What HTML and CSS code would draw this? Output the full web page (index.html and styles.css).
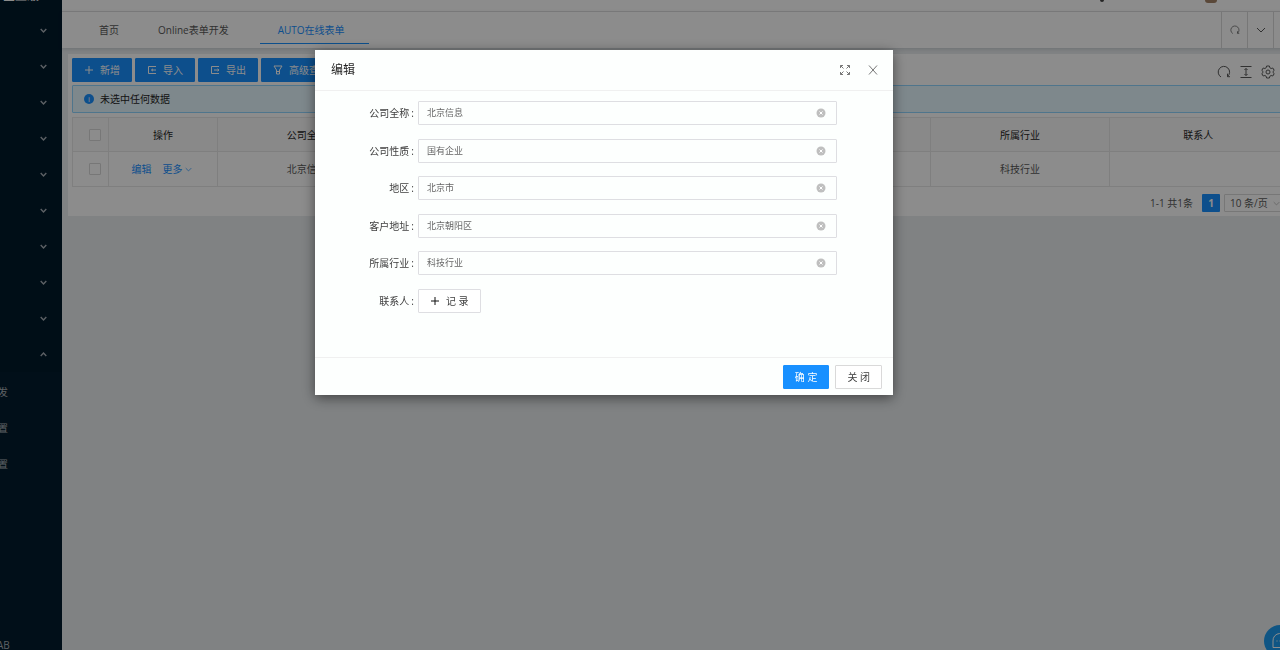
FILE: index.html
```html
<!DOCTYPE html>
<html lang="zh-CN">
<head>
<meta charset="utf-8">
<title>AUTO在线表单</title>
<link rel="stylesheet" href="styles.css">
</head>
<body>
<svg class="sprite" aria-hidden="true">
  <symbol id="down" viewBox="0 0 10 10"><path d="M1 3l4 4 4-4"/></symbol>
  <symbol id="up" viewBox="0 0 10 10"><path d="M1 7l4-4 4 4"/></symbol>
  <symbol id="plus" viewBox="0 0 10 10"><path d="M5 1v8M1 5h8"/></symbol>
  <symbol id="import" viewBox="0 0 10 10"><path d="M9 1.500H1.500v7H9M9 5H4.500M6 3.800L4.500 5 6 6.200"/></symbol>
  <symbol id="export" viewBox="0 0 10 10"><path d="M9 1.500H1.500v7H9M4 5h5M7.500 3.800L9 5 7.500 6.200"/></symbol>
  <symbol id="filter" viewBox="0 0 10 10"><path d="M1 1h8L6.500 5v4h-3V5zM3.500 6.500h3"/></symbol>
  <symbol id="reload" viewBox="0 0 14 14"><path d="M4 12A5.700 5.700 0 1 1 10.500 11.500M10.500 8.700v3h2.500"/></symbol>
  <symbol id="height" viewBox="0 0 14 14"><path d="M1.500 1.500h11M1.500 12.500h11M7 4v6M5.500 5L7 3.300 8.500 5M5.500 9L7 10.700 8.500 9"/></symbol>
  <symbol id="gear" viewBox="0 0 14 14"><path d="M5.600 1h2.800l.4 1.700 1.300.8 1.700-.5 1.400 2.400L12 6.500v1l1.200 1.100-1.400 2.400-1.700-.5-1.300.8-.4 1.700H5.600l-.4-1.700-1.300-.8-1.700.5L.8 8.600 2 7.500v-1L.8 5.400 2.200 3l1.700.5 1.300-.8z"/><circle cx="7" cy="7" r="2"/></symbol>
  <symbol id="clear" viewBox="0 0 10 10"><circle cx="5" cy="5" r="4.500" fill="#bfbfbf" stroke="none"/><path d="M3.500 3.500l3 3M6.500 3.500l-3 3" stroke="#fff"/></symbol>
  <symbol id="full" viewBox="0 0 10 10"><path d="M.5 3V.5H3M.5.5l3 3M7 .5h2.500V3M9.500.5l-3 3M.5 7v2.500H3M.5 9.500l3-3M7 9.500h2.500V7M9.500 9.500l-3-3"/></symbol>
  <symbol id="close" viewBox="0 0 10 10"><path d="M1 .5l8 9M9 .5l-8 9"/></symbol>
  <symbol id="chat" viewBox="0 0 18 18"><path d="M2 15.500V9a7 7 0 1 1 7 6.500zM5.500 9h1M8.500 9h1M11.500 9h1"/></symbol>
</svg>
<div class="app">
  <nav class="sidebar">
    <div class="logo">企业级</div>
    <ul class="menu">
      <li><svg class="icon"><use href="#down"/></svg></li>
      <li><svg class="icon"><use href="#down"/></svg></li>
      <li><svg class="icon"><use href="#down"/></svg></li>
      <li><svg class="icon"><use href="#down"/></svg></li>
      <li><svg class="icon"><use href="#down"/></svg></li>
      <li><svg class="icon"><use href="#down"/></svg></li>
      <li><svg class="icon"><use href="#down"/></svg></li>
      <li><svg class="icon"><use href="#down"/></svg></li>
      <li><svg class="icon"><use href="#down"/></svg></li>
      <li><svg class="icon"><use href="#up"/></svg></li>
    </ul>
    <ul class="submenu">
      <li>发</li><li>置</li><li>置</li>
    </ul>
    <div class="side-foot">AB</div>
  </nav>
  <div class="main">
    <header class="topbar"><span class="dot"></span><span class="avatar"></span></header>
    <div class="tabs">
      <a class="tab" href="#">首页</a>
      <a class="tab" href="#">Online表单开发</a>
      <a class="tab active" href="#">AUTO在线表单</a>
      <div class="tab-tools">
        <button aria-label="刷新"><svg class="icon"><use href="#reload"/></svg></button>
        <button aria-label="更多"><svg class="icon"><use href="#down"/></svg></button>
        <button aria-label="展开"></button>
      </div>
    </div>
    <section class="card">
      <div class="toolbar">
        <button class="btn primary"><svg class="icon"><use href="#plus"/></svg>新增</button>
        <button class="btn primary"><svg class="icon"><use href="#import"/></svg>导入</button>
        <button class="btn primary"><svg class="icon"><use href="#export"/></svg>导出</button>
        <button class="btn primary"><svg class="icon"><use href="#filter"/></svg>高级查询</button>
        <div class="tools">
          <svg class="icon"><use href="#reload"/></svg>
          <svg class="icon"><use href="#height"/></svg>
          <svg class="icon"><use href="#gear"/></svg>
        </div>
      </div>
      <div class="alert"><span class="info">i</span>未选中任何数据</div>
      <table class="grid">
        <colgroup><col class="c-check"><col class="c-action"><col><col><col><col><col><col></colgroup>
        <thead><tr><th><input type="checkbox" aria-label="全选"></th><th>操作</th><th>公司全称</th><th>公司性质</th><th>地区</th><th>客户地址</th><th>所属行业</th><th>联系人</th></tr></thead>
        <tbody><tr><td><input type="checkbox" aria-label="选择"></td><td><span class="actions"><a href="#">编辑</a><a href="#">更多<svg class="icon"><use href="#down"/></svg></a></span></td><td>北京信息</td><td>国有企业</td><td>北京市</td><td>北京朝阳区</td><td>科技行业</td><td></td></tr></tbody>
      </table>
      <div class="pager">
        <span>1-1 共1条</span>
        <button class="page">1</button>
        <span class="size"><select aria-label="每页条数"><option>10 条/页</option></select><svg class="icon"><use href="#down"/></svg></span>
      </div>
    </section>
  </div>
</div>
<button class="chat" aria-label="客服"><svg class="icon"><use href="#chat"/></svg></button>
<div class="mask"></div>
<div class="modal" role="dialog" aria-labelledby="title">
  <header class="modal-head">
    <h1 id="title">编辑</h1>
    <button aria-label="全屏"><svg class="icon"><use href="#full"/></svg></button>
    <button aria-label="关闭"><svg class="icon"><use href="#close"/></svg></button>
  </header>
  <form class="form">
    <div class="row"><label for="f1">公司全称<span>:</span></label><div class="field"><input id="f1" value="北京信息"><svg class="icon"><use href="#clear"/></svg></div></div>
    <div class="row"><label for="f2">公司性质<span>:</span></label><div class="field"><input id="f2" value="国有企业"><svg class="icon"><use href="#clear"/></svg></div></div>
    <div class="row"><label for="f3">地区<span>:</span></label><div class="field"><input id="f3" value="北京市"><svg class="icon"><use href="#clear"/></svg></div></div>
    <div class="row"><label for="f4">客户地址<span>:</span></label><div class="field"><input id="f4" value="北京朝阳区"><svg class="icon"><use href="#clear"/></svg></div></div>
    <div class="row"><label for="f5">所属行业<span>:</span></label><div class="field"><input id="f5" value="科技行业"><svg class="icon"><use href="#clear"/></svg></div></div>
    <div class="row"><label for="f6">联系人<span>:</span></label><button id="f6" type="button" class="btn record"><svg class="icon"><use href="#plus"/></svg>记 录</button></div>
  </form>
  <footer class="modal-foot">
    <button class="btn primary">确 定</button>
    <button class="btn">关 闭</button>
  </footer>
</div>
</body>
</html>
```
FILE: styles.css
```css
* { box-sizing: border-box; }
body {
  margin: 0;
  background: #e9edef;
  color: #595959;
  font: 10px/16px "Open Sans", "Noto Sans CJK SC", sans-serif;
  overflow: hidden;
}
button, input, select { font: inherit; color: inherit; margin: 0; }
button { border: 0; padding: 0; background: none; }
a { color: #1890ff; text-decoration: none; }
ul { margin: 0; padding: 0; list-style: none; }
.sprite { display: none; }
.icon { width: 10px; height: 10px; flex: none; fill: none; stroke: currentColor; stroke-width: 1; }

.app { display: flex; min-height: 100vh; overflow: hidden; }
.sidebar {
  display: flex;
  flex-direction: column;
  width: 62px;
  flex: none;
  height: 100vh;
  background: #001a2b;
  color: #a9b0b8;
}
.logo {
  display: flex;
  align-items: flex-end;
  height: 12px;
  margin-top: -8px;
  padding-left: 3px;
  margin-bottom: 8px;
  color: #fff;
  font-size: 12px;
  font-weight: 700;
  line-height: 16px;
}
.menu li { display: flex; align-items: center; justify-content: flex-end; height: 36px; padding-right: 15px; }
.menu .icon { width: 7px; height: 7px; stroke-width: 2; }
.submenu { flex: 1; padding-top: 2px; background: #031d2e; }
.submenu li { height: 36px; line-height: 36px; text-indent: -2px; }
.side-foot { background: #031d2e; height: 13px; text-indent: -3px; }

.main { flex: 1 0 auto; width: calc(100% - 50px); }
.topbar { display: flex; justify-content: flex-end; gap: 101px; height: 12px; padding-right: 75px; background: #fff; border-bottom: 1px solid #e4e4e4; }
.dot { width: 4px; height: 2px; background: #444; border-radius: 0 0 2px 2px; }
.avatar { width: 12px; height: 3px; background: #a58468; border-radius: 0 0 4px 4px; }
.tabs { display: flex; height: 36px; padding-left: 20px; background: #fff; box-shadow: 0 1px 4px rgba(0, 21, 41, .15); }
.tab { height: 32px; padding: 0 17px; margin-right: 5px; line-height: 36px; color: #595959; }
.tab + .tab { margin-right: 14px; }
.tab.active { padding: 0 24px 0 18px; color: #1890ff; border-bottom: 1px solid #1890ff; }
.tab-tools { display: flex; margin-left: auto; }
.tab-tools button { display: flex; align-items: center; justify-content: center; width: 26px; border-left: 1px solid #d9d9d9; }
.tab-tools button:last-child { width: 19px; }

.card { margin: 6px 0 0 6px; padding: 4px; background: #fff; }
.toolbar { display: flex; gap: 3px; }
.btn {
  display: flex;
  align-items: center;
  justify-content: center;
  gap: 6px;
  height: 24px;
  padding: 0 11px;
  border: 1px solid #d9d9d9;
  border-radius: 1px;
  background: #fff;
}
.btn.primary { border-color: #1890ff; background: #1890ff; color: #fff; }
.tools { display: flex; align-items: center; gap: 8px; margin-left: auto; padding: 3px 13px 0 0; }
.tools .icon { width: 14px; height: 14px; }
.alert {
  display: flex;
  align-items: center;
  gap: 6px;
  height: 28px;
  margin: 3px 0 4px;
  padding-left: 11px;
  border: 1px solid #91d5ff;
  background: #e6f7ff;
  border-radius: 1px;
  color: #262626;
}
.info { width: 10px; height: 10px; border-radius: 50%; background: #1890ff; color: #fff; font-size: 8px; line-height: 10px; text-align: center; }
.grid { width: 100%; table-layout: fixed; border-collapse: collapse; text-align: center; }
.grid th, .grid td { height: 34px; padding: 0; border: 1px solid #e8e8e8; font-weight: 400; }
.grid td { height: 35px; }
.grid th { background: #fafafa; color: #262626; }
.c-check { width: 36px; }
.c-action { width: 109px; }
.grid input { display: block; appearance: none; width: 12px; height: 12px; margin: 0 auto 0 16px; border: 1px solid #d9d9d9; border-radius: 1px; background: #fff; }
.actions { display: flex; justify-content: center; gap: 11px; padding-right: 3px; }
.actions a { display: flex; align-items: center; gap: 2px; }
.actions .icon { width: 7px; height: 7px; }
.pager { display: flex; align-items: center; justify-content: flex-end; padding-top: 7px; }
.page { width: 18px; height: 18px; margin: 0 4px 0 9px; border-radius: 1px; background: #1890ff; color: #fff; font-weight: 700; }
.size { display: flex; align-items: center; width: 64px; height: 18px; padding-right: 7px; border: 1px solid #d9d9d9; border-radius: 1px; }
.size select { appearance: none; width: 48px; padding: 0 0 0 5px; border: 0; background: none; }
.size .icon { width: 7px; height: 7px; color: #aaa; }

.chat {
  position: fixed;
  right: -16px;
  bottom: -7px;
  display: flex;
  align-items: center;
  justify-content: center;
  width: 32px;
  height: 32px;
  border-radius: 50%;
  background: #1c9cf0;
  color: #fff;
}
.chat .icon { width: 18px; height: 18px; stroke-width: 1; }
.mask { position: fixed; inset: 0; background: rgba(0, 0, 0, .45); }

.modal {
  position: fixed;
  top: 50px;
  left: calc(50% - 325px);
  width: 578px;
  max-width: 90vw;
  background: #fdfffe;
  box-shadow: 0 3px 12px rgba(0, 0, 0, .5);
}
.modal-head { display: flex; align-items: center; gap: 16px; height: 41px; padding: 0 14px 0 16px; border-bottom: 1px solid #f0f0f0; color: #777; }
.modal-head h1 { flex: 1; margin: 0; font-size: 12px; font-weight: 400; color: #262626; }
.modal-head button { display: flex; width: 12px; justify-content: center; }
.form { display: flex; flex-direction: column; justify-content: space-between; min-height: 266px; padding: 10px 56px 44px 0; }
.row { display: flex; align-items: center; color: #404040; }
.row label { width: 99px; margin-right: 4px; text-align: right; }
.row label span { margin-left: 2px; }
.field { display: flex; align-items: center; flex: 1; height: 24px; padding: 0 10px 0 8px; border: 1px solid #dedee2; border-radius: 1px; background: #fdfffe; }
.field input { flex: 1; min-width: 0; padding: 0; border: 0; background: none; outline: 0; font-size: 9px; color: #666; }
.record .icon { stroke: #111; stroke-width: 1; }
.record .icon use { stroke-width: 1; }
.record { border-color: #dedee2; }
.modal-foot { display: flex; justify-content: flex-end; gap: 6px; padding: 7px 11px 6px; border-top: 1px solid #f0f0f0; color: #404040; }
```
